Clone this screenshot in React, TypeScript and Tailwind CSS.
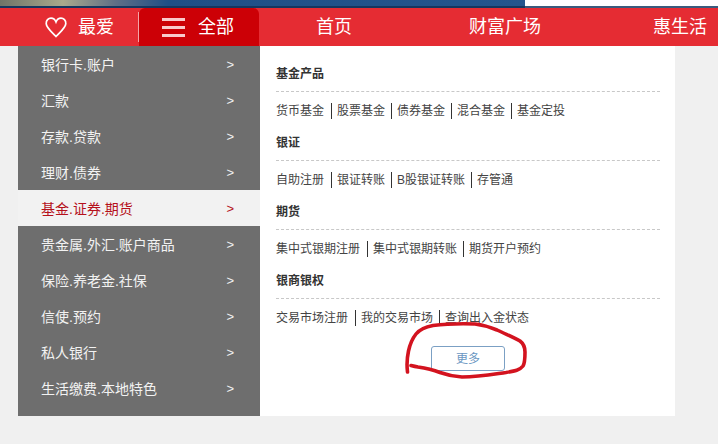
import React from 'react';

const menu = [
  '银行卡.账户',
  '汇款',
  '存款.贷款',
  '理财.债券',
  '基金.证券.期货',
  '贵金属.外汇.账户商品',
  '保险.养老金.社保',
  '信使.预约',
  '私人银行',
  '生活缴费.本地特色',
];

const sections = [
  { title: '基金产品', links: ['货币基金', '股票基金', '债券基金', '混合基金', '基金定投'] },
  { title: '银证', links: ['自助注册', '银证转账', 'B股银证转账', '存管通'] },
  { title: '期货', links: ['集中式银期注册', '集中式银期转账', '期货开户预约'] },
  { title: '银商银权', links: ['交易市场注册', '我的交易市场', '查询出入金状态'] },
];

const FONT = "font-['Liberation_Sans','Noto_Sans_CJK_SC',sans-serif]";

export default function App() {
  return (
    <div className={`${FONT} relative w-[718px] h-[444px] overflow-hidden bg-[#f0f0f0]`}>
      {/* browser chrome strip */}
      <div className="flex h-[8px]">
        <div className="w-[525px] border-b-[2px] border-b-[#16365f] bg-[linear-gradient(90deg,#6f7468_0,#a9a98c_12%,#5f6f86_22%,#1f4f86_32%,#24558d_100%)]" />
        <div className="flex-1 border-b-[2px] border-b-[#3a5a7d] bg-white" />
      </div>

      {/* top nav */}
      <div className="flex h-[38px] bg-[#e52c33] text-white text-[18px]">
        <div className="flex items-center w-[139px] pl-[45px] relative">
          <svg width="22" height="21" viewBox="0 0 22 21" fill="none" stroke="white" strokeWidth="1.7">
            <path d="M11 19.5 C7 15 1.5 11 1.2 6.6 C1 3.4 3.4 1.2 6 1.2 C8.2 1.2 10 2.6 11 5 C12 2.6 13.8 1.2 16 1.2 C18.6 1.2 21 3.4 20.8 6.6 C20.5 11 15 15 11 19.5 Z" />
          </svg>
          <span className="ml-[11px]">最爱</span>
          <div className="absolute right-0 top-[4px] h-[30px] w-px bg-[#f4a5a8]" />
        </div>
        <div className="flex items-center w-[120px] pl-[23px] bg-[#cc0006] rounded-t-[6px]">
          <div className="flex flex-col gap-[5px] w-[23px]">
            <div className="h-[3px] bg-[#f9c9cb]" />
            <div className="h-[3px] bg-[#f9c9cb]" />
            <div className="h-[3px] bg-[#f9c9cb]" />
          </div>
          <span className="ml-[13px]">全部</span>
        </div>
        <div className="flex items-center pl-[57px] whitespace-nowrap">
          <span>首页</span>
          <span className="ml-[117px]">财富广场</span>
          <span className="ml-[112px]">惠生活</span>
        </div>
      </div>

      <div className="flex ml-[18px] w-[657px] h-[370px]">
        {/* left menu */}
        <ul className="w-[242px] h-[370px] bg-[#6e6e6e] shrink-0">
          {menu.map((label, i) => (
            <li
              key={label}
              className={`flex items-center justify-between h-[36px] pt-[2px] pl-[23px] pr-[26px] text-[14px] ${
                i === 4 ? 'bg-[#f2f2f2] text-[#b5111b]' : 'text-[#f2f2f2]'
              }`}
            >
              <span>{label}</span>
              <span className="text-[13px]">&gt;</span>
            </li>
          ))}
        </ul>

        {/* right panel */}
        <div className="flex-1 bg-white pt-[10px] pl-[16px] pr-[15px] h-[370px]">
          {sections.map((s) => (
            <div key={s.title} className="h-[69px]">
              <div className="h-[36px] border-b border-dashed border-[#c8c8c8] pt-[10px] text-[12px] font-bold leading-[17px] text-[#333]">
                {s.title}
              </div>
              <div className="flex items-center mt-[11px] text-[12px] leading-[16px] text-[#444]">
                {s.links.map((l, i) => (
                  <span
                    key={l}
                    className={i === 0 ? 'pr-[7px]' : 'border-l border-[#333] pl-[5px] pr-[6px]'}
                  >
                    {l}
                  </span>
                ))}
              </div>
            </div>
          ))}
          <div className="flex mt-[14px] ml-[155px]">
            <button className="w-[74px] h-[25px] rounded-[3px] border border-[#7ba0c4] text-[12px] text-[#6b97c2]">
              更多
            </button>
          </div>
        </div>
      </div>

      {/* hand-drawn annotation */}
      <svg className="absolute left-0 top-0 pointer-events-none" width="718" height="444">
        <path
          d="M407.5 372 C406.5 364 407 358 408.5 351 C410 344 412 339 416 334 C420 329 425 327 433 325.5 C445 324 460 323.5 475 324 C484 325 490 327 497 330 C505 334 514 337 520 341 C524 344 525 347 525 352 C525 358 525 363 523 366 C520 370 515 371 506 372.5 C495 374 480 377 462 377 C452 376.5 447 375 440 372.5 C431 369 425 368 418 367 C415 366.5 413 366 411 365.5"
          fill="none"
          stroke="#d3131f"
          strokeWidth="3.6"
          strokeLinecap="round"
          strokeLinejoin="round"
        />
      </svg>
    </div>
  );
}
